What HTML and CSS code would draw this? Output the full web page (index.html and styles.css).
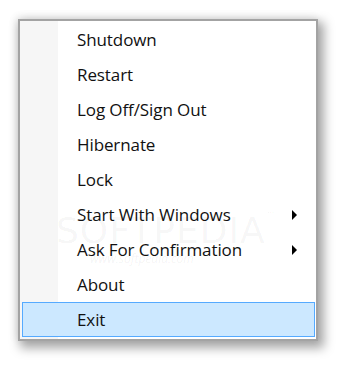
FILE: index.html
```html
<!DOCTYPE html>
<html>
<head>
<meta charset="utf-8">
<link rel="stylesheet" href="styles.css">
</head>
<body>
<div class="menu">
  <div class="gutter"></div>
  <div class="item">Shutdown</div>
  <div class="item">Restart</div>
  <div class="item">Log Off/Sign Out</div>
  <div class="item">Hibernate</div>
  <div class="item">Lock</div>
  <div class="item sub">Start With Windows<span class="arrow"></span></div>
  <div class="item sub">Ask For Confirmation<span class="arrow"></span></div>
  <div class="item">About</div>
  <div class="item active">Exit</div>
  <div class="watermark">SOFTPEDIA<sup>™</sup></div>
  <div class="watermark-url">www.softpedia.com</div>
</div>
</body>
</html>
```

FILE: styles.css
```css
html, body {
  margin: 0;
  padding: 0;
  background: #ffffff;
}
body {
  width: 350px;
  height: 372px;
  overflow: hidden;
  font-family: "Open Sans", "Noto Sans", sans-serif;
}
.menu {
  position: relative;
  margin: 19px 0 0 18px;
  width: 296px;
  padding: 1px 0 2px 0;
  background: #ffffff;
  border: 2px solid #a3a3a3;
  box-shadow: 4px 5px 10px 2px rgba(0,0,0,0.35), -2px -2px 8px rgba(0,0,0,0.08);
  display: flex;
  flex-direction: column;
}
.gutter {
  position: absolute;
  left: 0;
  top: 0;
  bottom: 0;
  width: 38px;
  background: #f6f6f6;
}
.item {
  position: relative;
  height: 33px;
  margin: 0 1px 0 2px;
  padding-left: 54px;
  border: 1px solid transparent;
  display: flex;
  align-items: center;
  font-size: 17px;
  letter-spacing: -0.1px;
  color: #111111;
}
.item.active {
  background: #cce8ff;
  border-color: #55aaff;
}
.arrow {
  position: absolute;
  right: 17px;
  top: 12px;
  width: 0;
  height: 0;
  border-left: 5px solid #000;
  border-top: 5px solid transparent;
  border-bottom: 5px solid transparent;
}
.watermark {
  position: absolute;
  left: 36px;
  top: 190px;
  font-family: "DejaVu Sans", sans-serif;
  font-size: 36px;
  line-height: 40px;
  letter-spacing: 1px;
  color: rgba(0,0,0,0.045);
  pointer-events: none;
}
.watermark sup {
  font-size: 10px;
  vertical-align: top;
  line-height: 10px;
}
.watermark-url {
  position: absolute;
  left: 70px;
  top: 229px;
  font-size: 12px;
  font-style: italic;
  color: rgba(0,0,0,0.06);
  pointer-events: none;
}
```
